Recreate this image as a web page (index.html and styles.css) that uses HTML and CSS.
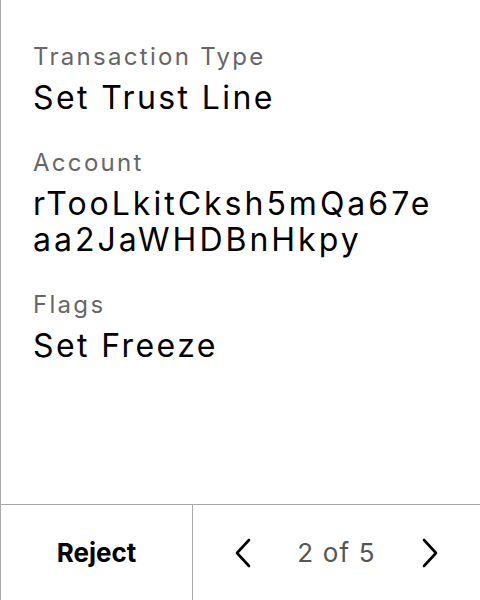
FILE: index.html
```html
<!DOCTYPE html>
<html>
<head>
<meta charset="utf-8">
<link rel="stylesheet" href="styles.css">
</head>
<body>
<div class="screen">
  <div class="content">
    <div class="field">
      <div class="label">Transaction Type</div>
      <div class="value">Set Trust Line</div>
    </div>
    <div class="field">
      <div class="label">Account</div>
      <div class="value address">rTooLkitCksh5mQa67e<br>aa2JaWHDBnHkpy</div>
    </div>
    <div class="field">
      <div class="label">Flags</div>
      <div class="value">Set Freeze</div>
    </div>
  </div>
  <div class="footer">
    <div class="reject">Reject</div>
    <div class="pager">
      <svg class="chev" width="20" height="32" viewBox="0 0 20 32"><path d="M16 3 L4 16 L16 29" fill="none" stroke="#000" stroke-width="2.6" stroke-linecap="round" stroke-linejoin="round"/></svg>
      <span class="count">2 of 5</span>
      <svg class="chev" width="20" height="32" viewBox="0 0 20 32"><path d="M4 3 L16 16 L4 29" fill="none" stroke="#000" stroke-width="2.6" stroke-linecap="round" stroke-linejoin="round"/></svg>
    </div>
  </div>
</div>
</body>
</html>
```
FILE: styles.css
```css
html, body { margin: 0; padding: 0; background: #fff; }
body { font-family: Inter, "Noto Sans", sans-serif; }
.screen {
  width: 480px; height: 600px; box-sizing: border-box;
  border-left: 1px solid #aaa;
  display: flex; flex-direction: column;
}
.content { flex: 1; padding: 43px 24px 0 32px; display: flex; flex-direction: column; gap: 33px; }
.field { display: flex; flex-direction: column; gap: 9px; }
.label { font-size: 24px; line-height: 28px; letter-spacing: 2.3px; color: #666; }
.value { font-size: 32px; line-height: 36px; letter-spacing: 2.4px; color: #000; }
.value.address { letter-spacing: 3px; }
.footer { height: 96px; border-top: 1px solid #aaa; display: flex; box-sizing: border-box; }
.reject { width: 191px; border-right: 1px solid #aaa; display: flex; align-items: center; justify-content: center; font-size: 26px; font-weight: 700; color: #000; }
.pager { flex: 1; display: flex; align-items: center; justify-content: space-between; padding: 0 40px 0 40px; }
.count { font-size: 26px; letter-spacing: 1.2px; color: #555; }
```
